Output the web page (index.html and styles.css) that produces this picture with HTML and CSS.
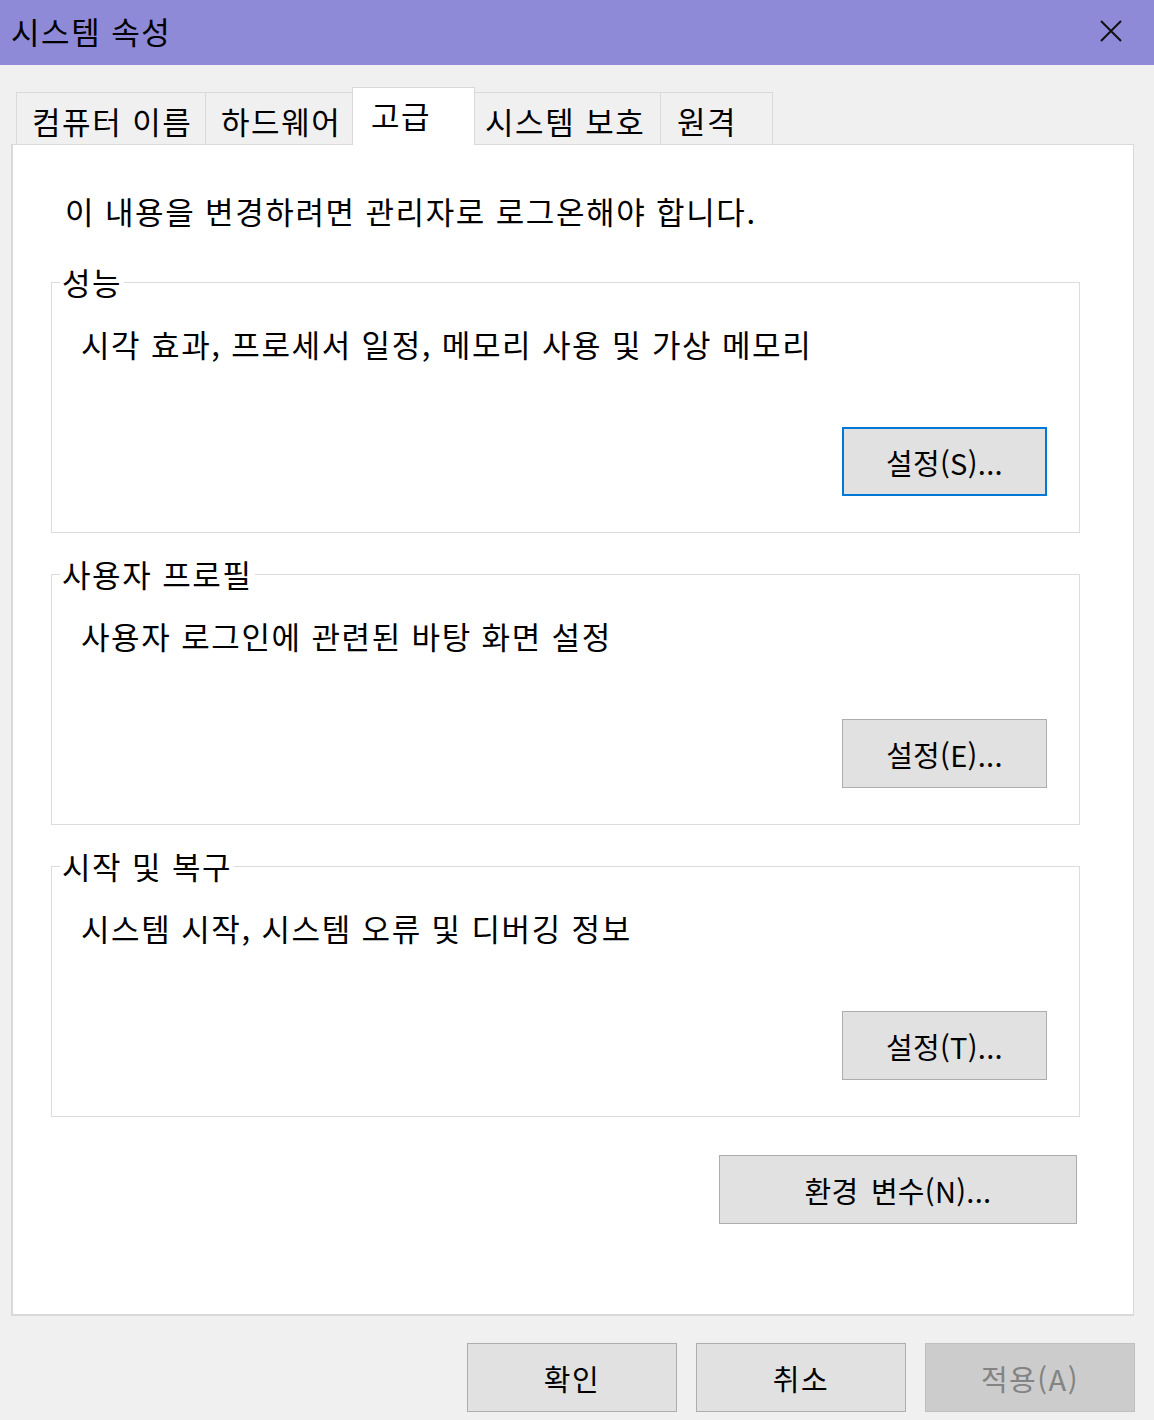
FILE: index.html
```html
<!DOCTYPE html>
<html lang="ko">
  <head>
    <meta charset="UTF-8" />
    <title>시스템 속성</title>
    <link rel="stylesheet" href="styles.css">
  </head>
  <body>
    <div class="titlebar">
      <span class="title">시스템 속성</span>
      <button class="close-btn" aria-label="닫기">
        <svg width="22" height="22" viewBox="0 0 22 22">
          <path d="M1 1 L21 21 M21 1 L1 21" stroke="#111" stroke-width="2" fill="none" />
        </svg>
      </button>
    </div>

    <div class="dialog">
      <div class="tabs">
        <div class="tab tab-name">컴퓨터 이름</div>
        <div class="tab tab-hw">하드웨어</div>
        <div class="tab active">고급</div>
        <div class="tab tab-protect">시스템 보호</div>
        <div class="tab tab-remote">원격</div>
      </div>

      <div class="panel">
        <p class="notice">이 내용을 변경하려면 관리자로 로그온해야 합니다.</p>

        <fieldset class="group">
          <legend>성능</legend>
          <p class="group-desc">시각 효과, 프로세서 일정, 메모리 사용 및 가상 메모리</p>
          <div class="group-actions">
            <button class="btn focused">설정(S)...</button>
          </div>
        </fieldset>

        <fieldset class="group">
          <legend>사용자 프로필</legend>
          <p class="group-desc">사용자 로그인에 관련된 바탕 화면 설정</p>
          <div class="group-actions">
            <button class="btn">설정(E)...</button>
          </div>
        </fieldset>

        <fieldset class="group">
          <legend>시작 및 복구</legend>
          <p class="group-desc">시스템 시작, 시스템 오류 및 디버깅 정보</p>
          <div class="group-actions">
            <button class="btn">설정(T)...</button>
          </div>
        </fieldset>

        <div class="env-row">
          <button class="btn btn-wide">환경 변수(N)...</button>
        </div>
      </div>

      <div class="footer">
        <button class="btn btn-footer">확인</button>
        <button class="btn btn-footer">취소</button>
        <button class="btn btn-footer" disabled>적용(A)</button>
      </div>
    </div>
  </body>
</html>
```

FILE: styles.css
```css
* {
  margin: 0;
  padding: 0;
  box-sizing: border-box;
}

body {
  background: #f0f0f0;
  font-family: "Noto Sans CJK KR", "Noto Sans", sans-serif;
  font-size: 31px;
  letter-spacing: 1.6px;
  word-spacing: -0.5px;
  color: #000;
  width: 1154px;
  height: 1420px;
  overflow: hidden;
}

.titlebar {
  height: 65px;
  background: #8e8ad8;
  display: flex;
  align-items: center;
  justify-content: space-between;
  padding: 0 32px 0 11px;
}

.title {
  font-size: 31px;
  line-height: 40px;
  margin-top: -3px;
}

.close-btn {
  background: none;
  border: none;
  width: 22px;
  height: 22px;
  display: flex;
  margin-top: -4px;
}

.tabs {
  display: flex;
  align-items: flex-end;
  padding-left: 16px;
  margin-top: 22px;
  height: 58px;
  position: relative;
  z-index: 1;
}

.tab {
  height: 52px;
  margin-bottom: 1px;
  background: #f0f0f0;
  border: 1px solid #d9d9d9;
  border-bottom: none;
  border-left: none;
  padding: 0 14px;
  line-height: 56px;
  white-space: nowrap;
}

.tab-name {
  border-left: 1px solid #d9d9d9;
  width: 190px;
  padding-left: 15px;
}

.tab-hw {
  width: 147px;
  padding-left: 15px;
}

.tab-protect {
  width: 186px;
  padding-left: 10px;
}

.tab-remote {
  width: 112px;
  padding-left: 16px;
}

.tab.active {
  background: #fff;
  height: 58px;
  margin-bottom: 0;
  width: 123px;
  padding-left: 18px;
  border-left: 1px solid #d9d9d9;
  margin-left: -1px;
  line-height: 54px;
}

.panel {
  margin: -1px 20px 0 11px;
  height: 1172px;
  background: #fff;
  border: 1px solid #d9d9d9;
  border-left-width: 2px;
  border-bottom-width: 2px;
  padding: 46px 53px 0 38px;
}

.notice {
  line-height: 40px;
  padding-left: 14px;
  margin-bottom: 31px;
}

.group {
  border: 1px solid #dcdcdc;
  padding: 0 32px 36px 29px;
  margin-bottom: 21px;
}

.group legend {
  line-height: 40px;
  padding: 0 2px;
  margin-left: -21px;
}

.group-desc {
  line-height: 40px;
  margin-top: 22px;
}

.group-actions {
  display: flex;
  justify-content: flex-end;
  margin-top: 63px;
}

.btn {
  font-family: inherit;
  font-size: 29px;
  letter-spacing: 0.3px;
  word-spacing: 4px;
  width: 205px;
  height: 69px;
  background: #e1e1e1;
  border: 1px solid #adadad;
  color: #000;
}

.btn.focused {
  border: 2px solid #0078d7;
}

.env-row {
  display: flex;
  justify-content: flex-end;
  margin-top: 38px;
  padding-right: 3px;
}

.btn-wide {
  width: 358px;
}

.footer {
  display: flex;
  justify-content: flex-end;
  gap: 19px;
  padding: 27px 19px 0 0;
}

.btn-footer {
  width: 210px;
  letter-spacing: 1.5px;
}

.btn-footer:disabled {
  background: #cccccc;
  border-color: #bfbfbf;
  color: #838383;
}
```
